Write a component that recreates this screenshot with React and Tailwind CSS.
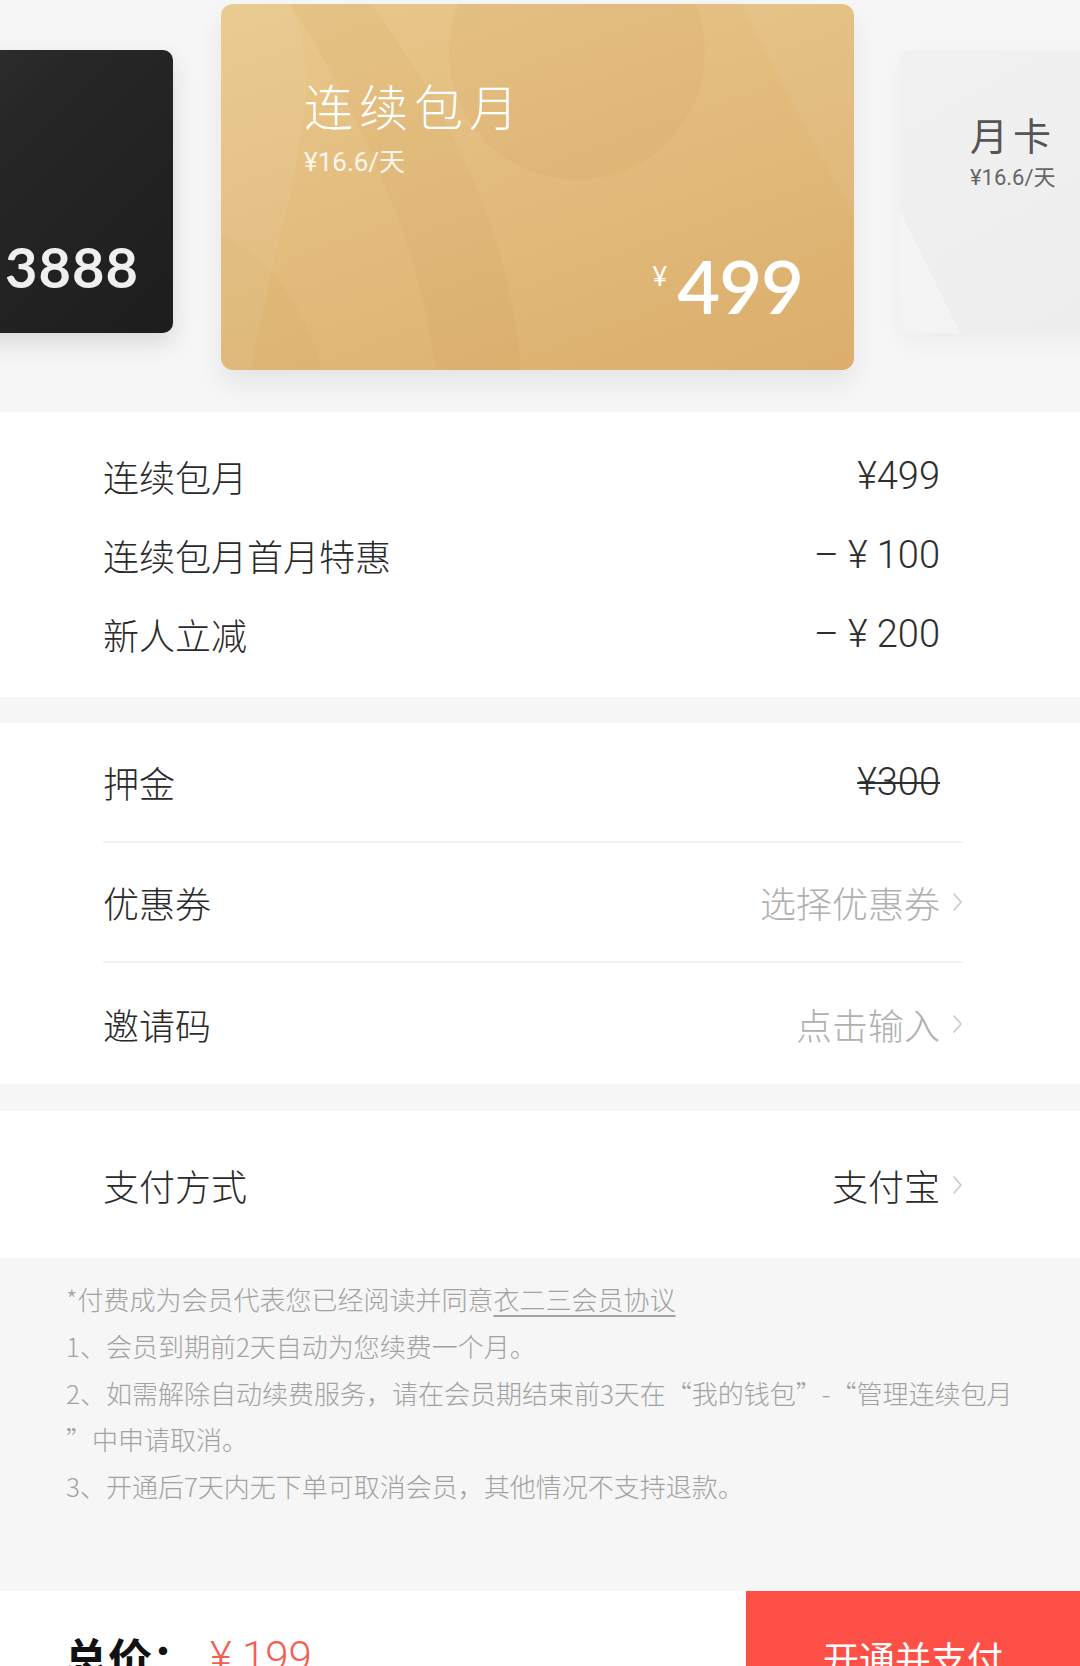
import React from "react";

function Chevron() {
  return (
    <svg width="11" height="22" viewBox="0 0 11 22" className="shrink-0">
      <polyline points="2,3 9,11 2,19" fill="none" stroke="#c9c9c9" strokeWidth="1.6" strokeLinecap="round" strokeLinejoin="round" />
    </svg>
  );
}

function Spacer() {
  return <span className="w-[11px] shrink-0" />;
}

function Row({ label, value, valueClass, chevron, h, border }) {
  return (
    <div
      className={
        "flex items-center justify-between " +
        h +
        (border ? " border-b-2 border-[#f3f3f3]" : "")
      }
    >
      <span className="text-[36px] leading-none font-light text-[#2a2a2a] font-['Noto_Sans_CJK_SC',sans-serif]">{label}</span>
      <div className="flex items-center gap-[12px]">
        <span className={valueClass}>{value}</span>
        {chevron ? <Chevron /> : <Spacer />}
      </div>
    </div>
  );
}

const num = "text-[38px] leading-none text-[#2e2e2e] font-light font-['Roboto','Noto_Sans_CJK_SC',sans-serif]";
const grayCjk = "text-[36px] leading-none font-light text-[#b0b0b0] font-['Noto_Sans_CJK_SC',sans-serif]";
const darkCjk = "text-[36px] leading-none font-light text-[#2a2a2a] font-['Noto_Sans_CJK_SC',sans-serif]";

export default function App() {
  return (
    <div className="relative w-[1080px] h-[1666px] overflow-hidden bg-[#f6f6f6] font-['Roboto','Noto_Sans_CJK_SC',sans-serif]">
      {/* card carousel */}
      <div className="h-[412px] overflow-hidden pt-[4px]">
        <div className="flex items-start ml-[-227px]">
          {/* dark card */}
          <div className="relative mt-[46px] w-[400px] h-[283px] shrink-0 rounded-[10px] overflow-hidden bg-[linear-gradient(135deg,#3b3b3b_0%,#272727_45%,#1d1d1d_100%)] shadow-[0_10px_24px_rgba(0,0,0,0.12)]">
            <div className="pl-[232px] pt-[189px] text-[56px] leading-none font-bold tracking-[1px] text-[#efefef] font-['Lato',sans-serif]">
              3888
            </div>
          </div>

          {/* gold card */}
          <div className="relative ml-[48px] w-[633px] h-[366px] shrink-0 rounded-[12px] overflow-hidden bg-[linear-gradient(160deg,#e9c88c_0%,#e2bb7c_50%,#dbae6c_100%)] shadow-[0_14px_26px_rgba(0,0,0,0.07)]">
            <svg className="absolute inset-0" width="633" height="366" viewBox="0 0 633 366">
              <path d="M0 0 H70 C 110 90, 60 200, 30 366 H0 Z" fill="#ffffff" opacity="0.06" />
              <path d="M70 0 H150 C 230 110, 290 230, 300 366 H 215 C 200 250, 150 130, 70 0 Z" fill="#9a6420" opacity="0.04" />
              <circle cx="356" cy="48" r="128" fill="#9a6420" opacity="0.045" />
              <path d="M520 0 H633 V210 C 600 150, 560 80, 520 0 Z" fill="#ffffff" opacity="0.05" />
              <path d="M0 230 C 60 260, 90 320, 100 366 H0 Z" fill="#9a6420" opacity="0.035" />
            </svg>
            <div className="relative flex flex-col h-full">
              <div className="pl-[83px] pt-[76px] text-[49px] leading-none font-light tracking-[6px] text-white font-['Noto_Sans_CJK_SC',sans-serif]">
                连续包月
              </div>
              <div className="pl-[83px] mt-[20px] text-[26px] leading-none text-white/85">
                ¥16.6/天
              </div>
              <div className="mt-auto self-end pr-[51px] pb-[47px] flex items-start text-white font-['Lato',sans-serif]">
                <span className="mt-[14px] text-[26px] leading-none">¥</span>
                <span className="ml-[10px] text-[74px] leading-none font-semibold tracking-[-1px]">499</span>
              </div>
            </div>
          </div>

          {/* light card */}
          <div className="relative ml-[46px] mt-[46px] w-[400px] h-[283px] shrink-0 rounded-[10px] overflow-hidden bg-[linear-gradient(150deg,#f1f1f1_0%,#eeeeee_60%,#ebebeb_100%)] shadow-[0_10px_24px_rgba(0,0,0,0.04)]">
            <svg className="absolute inset-0" width="400" height="283" viewBox="0 0 400 283">
              <path d="M0 160 L60 283 H0 Z" fill="#ffffff" opacity="0.3" />
            </svg>
            <div className="relative pl-[70px] pt-[65px]">
              <div className="text-[38px] leading-none tracking-[5px] text-[#555] font-['Noto_Sans_CJK_SC',sans-serif]">月卡</div>
              <div className="mt-[14px] text-[22px] leading-none text-[#666]">¥16.6/天</div>
            </div>
          </div>
        </div>
      </div>

      {/* price breakdown */}
      <div className="bg-white pt-[24px] pb-[24px] pl-[103px] pr-[117px]">
        <Row h="h-[79px]" label="连续包月" value="¥499" valueClass={num} />
        <Row h="h-[79px]" label="连续包月首月特惠" value="– ¥ 100" valueClass={num} />
        <Row h="h-[79px]" label="新人立减" value="– ¥ 200" valueClass={num} />
      </div>

      <div className="h-[26px]" />

      <div className="bg-white pl-[103px] pr-[117px]">
        <Row h="h-[120px]" border label="押金" value="¥300" valueClass={num + " line-through decoration-[2px]"} />
        <Row h="h-[120px]" border label="优惠券" value="选择优惠券" valueClass={grayCjk} chevron />
        <Row h="h-[121px]" label="邀请码" value="点击输入" valueClass={grayCjk} chevron />
      </div>

      <div className="h-[27px]" />

      <div className="bg-white pl-[103px] pr-[117px]">
        <Row h="h-[147px]" label="支付方式" value="支付宝" valueClass={darkCjk} chevron />
      </div>

      {/* notes */}
      <div className="h-[333px] pt-[18px] pl-[66px] text-[26px] leading-[46.75px] font-light text-[#a2a2a2] font-['Noto_Sans_CJK_SC',sans-serif]">
        <div className="whitespace-nowrap">
          *付费成为会员代表您已经阅读并同意<span className="underline underline-offset-[5px] decoration-[1.5px]">衣二三会员协议</span>
        </div>
        <div className="whitespace-nowrap">1、会员到期前2天自动为您续费一个月。</div>
        <div className="whitespace-nowrap">2、如需解除自动续费服务，请在会员期结束前3天在“我的钱包”-“管理连续包月</div>
        <div className="whitespace-nowrap">”中申请取消。</div>
        <div className="whitespace-nowrap">3、开通后7天内无下单可取消会员，其他情况不支持退款。</div>
      </div>

      {/* bottom bar */}
      <div className="flex h-[132px] bg-white">
        <div className="flex-1 flex items-center pl-[64px]">
          <span className="text-[44px] leading-none font-semibold text-[#111] font-['Noto_Sans_CJK_SC',sans-serif]">总价：</span>
          <span className="ml-[14px] text-[42px] leading-none font-light text-[#f45d52]">¥ 199</span>
        </div>
        <div className="w-[334px] bg-[#fe5046] flex items-center justify-center text-white text-[36px] leading-none font-['Noto_Sans_CJK_SC',sans-serif]">
          开通并支付
        </div>
      </div>
    </div>
  );
}
